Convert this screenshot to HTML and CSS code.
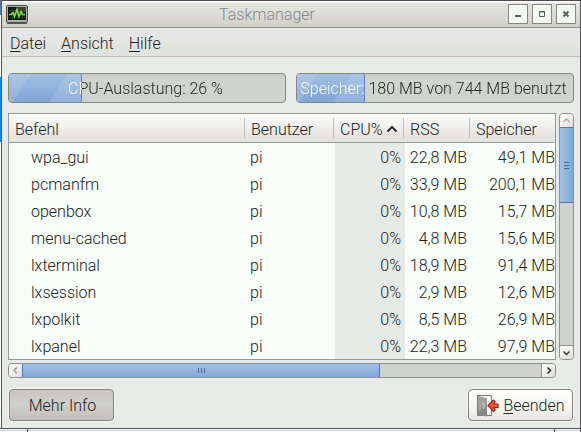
FILE: index.html
```html
<!DOCTYPE html>
<html lang="de">
<head>
<meta charset="utf-8">
<title>Taskmanager</title>
<link rel="stylesheet" href="styles.css">
</head>
<body>
<div class="desk"></div>
<main class="window">
  <header class="titlebar">
    <svg class="appicon" width="22" height="19" viewBox="0 0 22 19">
      <rect x=".5" y=".5" width="21" height="17" rx="1.500" fill="#aeb2ae" stroke="#4a504a"/>
      <rect x="2" y="2" width="18" height="13" fill="#101810"/>
      <path d="M11 2h9v5q-5 2-12 2z" fill="#3a473a"/>
      <path d="M3 5.500h16M3 9.500h16M3 12.500h16M6.500 3v11M11.500 3v11M16.500 3v11" stroke="#2f4f2c" stroke-width=".6"/>
      <path d="M3 9.500h2l2-2 1.500 4 2.500-7 2 7 2-5 1.500 3H19" fill="none" stroke="#7be03a" stroke-width="1.500"/>
      <path d="M1 18.500h20" stroke="#555b55"/>
    </svg>
    <h1>Taskmanager</h1>
    <div class="controls">
      <button><svg width="18" height="18"><path d="M6 11h6" stroke="#5b625d" stroke-width="2"/></svg></button>
      <button><svg width="18" height="18"><path d="M6.500 6.500h5v5h-5zM6 7h6" fill="none" stroke="#5b625d"/></svg></button>
      <button><svg width="18" height="18"><path d="M6.500 6.500l5 5M11.500 6.500l-5 5" stroke="#5b625d" stroke-width="2"/></svg></button>
    </div>
  </header>
  <nav class="menu"><span><u>D</u>atei</span><span><u>A</u>nsicht</span><span><u>H</u>ilfe</span></nav>
  <section class="meters">
    <div class="meter cpu"><div class="fill"></div><span class="label">CPU-Auslastung: 26 %</span></div>
    <div class="meter mem"><div class="fill"></div><span class="label">Speicher: 180 MB von 744 MB benutzt</span></div>
  </section>
  <section class="listing">
    <div class="table">
      <div class="row head"><span>Befehl</span><span>Benutzer</span><span>CPU%<svg width="12" height="8" viewBox="0 0 12 8"><path d="M1.500 6.500L6 2l4.500 4.500" fill="none" stroke="#222" stroke-width="1.800"/></svg></span><span>RSS</span><span>Speicher</span></div>
      <div class="row"><span>wpa_gui</span><span>pi</span><span>0%</span><span>22,8 MB</span><span>49,1 MB</span></div>
      <div class="row"><span>pcmanfm</span><span>pi</span><span>0%</span><span>33,9 MB</span><span>200,1 MB</span></div>
      <div class="row"><span>openbox</span><span>pi</span><span>0%</span><span>10,8 MB</span><span>15,7 MB</span></div>
      <div class="row"><span>menu-cached</span><span>pi</span><span>0%</span><span>4,8 MB</span><span>15,6 MB</span></div>
      <div class="row"><span>lxterminal</span><span>pi</span><span>0%</span><span>18,9 MB</span><span>91,4 MB</span></div>
      <div class="row"><span>lxsession</span><span>pi</span><span>0%</span><span>2,9 MB</span><span>12,6 MB</span></div>
      <div class="row"><span>lxpolkit</span><span>pi</span><span>0%</span><span>8,5 MB</span><span>26,9 MB</span></div>
      <div class="row"><span>lxpanel</span><span>pi</span><span>0%</span><span>22,3 MB</span><span>97,9 MB</span></div>
    </div>
    <div class="vscroll">
      <div class="step"><svg width="13" height="13"><path d="M3.500 8L6.500 5l3 3" fill="none" stroke="#aaa" stroke-width="1.300"/></svg></div>
      <div class="thumb"><svg width="5" height="7"><path d="M0 .5h5M0 3.500h5M0 6.500h5" stroke="#466a9b"/></svg></div>
      <div class="step last"><svg width="13" height="13"><path d="M3.500 5.500L6.500 8.500l3-3" fill="none" stroke="#333" stroke-width="1.500"/></svg></div>
    </div>
    <div class="hscroll">
      <div class="step"><svg width="13" height="13"><path d="M8 3.500L5 6.500l3 3" fill="none" stroke="#999" stroke-width="1.300"/></svg></div>
      <div class="thumb"><svg width="7" height="5"><path d="M.5 0v5M3.500 0v5M6.500 0v5" stroke="#466a9b"/></svg></div>
      <div class="step last"><svg width="13" height="13"><path d="M5.500 3.500L8.500 6.500l-3 3" fill="none" stroke="#333" stroke-width="1.500"/></svg></div>
    </div>
  </section>
  <footer class="actions">
    <button class="more">Mehr Info</button>
    <button class="quit"><svg width="24" height="22" viewBox="0 0 24 22">
      <path d="M1.500.5h14v20h-14z" fill="#f4f6f4" stroke="#777"/>
      <path d="M2 1l9 2.500v18L2 20z" fill="#858a87"/><path d="M2 1l9 2.500V8L2 17z" fill="#a0a4a1"/>
      <path d="M7 8l2 3-2 3" fill="none" stroke="#d5d8d5"/>
      <path d="M12 10.500L17.500 5l1.500 1.500L17.500 9H22v3.500h-4.500L19 15l-1.500 1.500z" fill="#f65b2c" stroke="#b81512" stroke-width="1.200"/>
    </svg><span><u>B</u>eenden</span></button>
  </footer>
</main>
<div class="below"><span></span><span></span><span></span></div>
</body>
</html>
```
FILE: styles.css
```css
* { box-sizing: border-box; }
body { margin: 0; width: 581px; height: 434px; overflow: hidden; display: grid; grid-template: 428px 6px / 1px 580px; background: #fff; font: 300 16px/20px Roboto, sans-serif; color: #202320; }
button { font: inherit; color: inherit; padding: 0; }
svg { display: block; }
u { text-decoration-thickness: 1px; text-underline-offset: 2px; }
.desk { background: linear-gradient(#5f7ba5 0 15px, #fff 15px 77px, #1e8ae8 77px 142px, #fff 142px); }
.window { height: 428px; border: 1px solid #555457; border-top-color: #4b474b; border-bottom: 0; background: #e7ebe7; }
.titlebar { height: 27px; border-bottom: 1px solid #8c968d; background: linear-gradient(#fff 0 1px, #e0e5de 2px, #dcddd6 50%, #d2cec8); display: flex; align-items: center; padding: 0 4px; }
.appicon { flex: none; margin-top: 1px; }
.titlebar h1 { flex: 1; margin: 2px 0 0 -2px; font: 300 16px/20px Roboto, sans-serif; color: #858786; text-align: center; }
.controls { display: flex; gap: 4px; }
.controls button { width: 20px; height: 20px; border: 1px solid #898783; background: #f5faf5; }
.menu { height: 29px; border-bottom: 1px solid #c5bbb9; background: linear-gradient(#e6e6e6 0 35%, #e7e5df 50%, #dfe4e0 75%, #dfe4e0); display: flex; gap: 15px; padding: 6px 8px 0; }
.meters { display: grid; grid-template-columns: 278px 278px; gap: 10px; padding: 16px 6px 0; }
.meter { position: relative; height: 30px; border: 1px solid #858783; border-radius: 4px; background: linear-gradient(#c8cbc8, #d0d3d0 20%, #cfd2cf); }
.label { --split: 73px; position: relative; display: block; white-space: nowrap; width: 276px; line-height: 29px; text-align: center; color: transparent; background: linear-gradient(90deg, #fff var(--split), #202320 var(--split)); background-clip: text; -webkit-background-clip: text; }
.cpu .label { padding-right: 3px; }
.mem .label { --split: 68px; padding-right: 3px; }
.fill { position: absolute; inset: 0 auto 0 0; border-radius: 3px 1px 1px 3px; border-right: 1px solid #5c83b6; background: linear-gradient(123deg, #ffffff20 24%, transparent 25% 64%, #ffffff20 65%), linear-gradient(#a0bee2, #80a6d5); }
.cpu .fill { width: 73px; }
.mem .fill { width: 68px; }
.listing { display: grid; grid-template: 247px 15px / 548px 15px; gap: 3px; padding: 10px 6px 0; }
.table { border: 1px solid #969a96; background: #f8fdf9; overflow: hidden; }
.row { display: grid; grid-template-columns: 236px 90px 70px 66px 84px; height: 27px; line-height: 29px; }
.row span { white-space: nowrap; text-align: right; }
.row span:nth-child(1) { text-align: left; padding-left: 22px; }
.row span:nth-child(2) { text-align: left; padding-left: 5px; }
.row span:nth-child(3) { height: 27px; background: #e6eae6; padding-right: 4px; }
.row span:nth-child(4) { padding-right: 4px; }
.head { height: 29px; line-height: 31px; border-bottom: 1px solid #969a96; background: linear-gradient(#fcfcfb, #f0f1ef 45%, #e9e5df 72%, #e1e4e0); grid-template-columns: 236px 89px 70px 66px 85px; }
.head span:nth-child(n) { height: 28px; text-align: left; background: linear-gradient(#bec0bd, #bec0bd) right 4px / 1px 20px no-repeat; padding: 0 0 0 6px; }
.head span:nth-child(5) { background: none; }
.head svg { display: inline; margin: 0 0 2px 3px; }
.vscroll, .hscroll { display: flex; border: 1px solid #92908d; border-radius: 4px; background: #cfd2ce; overflow: hidden; }
.vscroll { flex-direction: column; }
.hscroll { grid-row: 2; }
.step { width: 13px; height: 13px; background: linear-gradient(135deg, #fff, #deddd9); flex: none; }
.vscroll .last { margin-top: auto; outline: 1px solid #92908d; }
.hscroll .last { margin-left: auto; outline: 1px solid #92908d; }
.thumb { display: grid; place-items: center; border: 1px solid #537ba9; }
.vscroll .thumb { height: 76px; margin: 0 -1px; background: linear-gradient(90deg, #a2c2e7, #81a7d5); }
.hscroll .thumb { width: 358px; margin: -1px 0; background: linear-gradient(#a2c2e7, #81a7d5); }
.actions { display: flex; justify-content: space-between; padding: 11px 7px 0; }
.actions button { height: 32px; border: 1px solid #88827e; border-radius: 4px; box-shadow: 0 0 0 1px #f3f5f1; display: flex; align-items: center; justify-content: center; padding-top: 1px; }
.actions .more { width: 105px; padding-left: 2px; background: linear-gradient(#c9c6c3, #cfcfcc 48%, #c3bfba); }
.quit { width: 105px; gap: 3px; background: linear-gradient(#fdfefd, #f6f8f5 50%, #e8e6e1); }
.below { grid-column: 1 / 3; display: grid; grid-template-columns: 28px 527px 26px; background: linear-gradient(#515156 0 1px, #f2f4f2 1px 2px, #cdd0d7 2px 3px, #fff 3px); }
.below span { height: 4px; border-right: 1px solid #515156; }
```
